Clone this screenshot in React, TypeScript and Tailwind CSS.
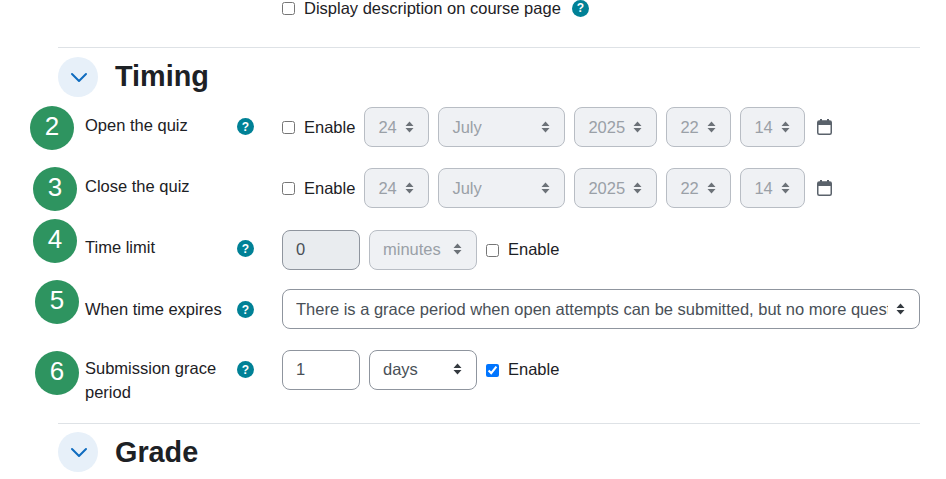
import React from 'react'

const Caret = ({ muted }: { muted?: boolean }) => (
    <svg width="9" height="14" viewBox="0 0 9 14" className={`shrink-0 fill-current ${muted ? 'text-[#6c7278]' : 'text-[#343a40]'}`}>
        <path d="M4.5 1.5 8.5 6H.5zM4.5 12.5.5 8h8z" />
    </svg>
)

const Select = ({ text, width, disabled, long, lift }: { text: string; width: string; disabled?: boolean; long?: boolean; lift?: boolean }) => (
    <div className={`${width} ${disabled ? 'bg-[#eff1f4] border-[#b8bdc4] text-[#9aa0a7]' : 'bg-white border-[#8f959e] text-[#495057]'} ${lift ? 'pb-[2px]' : ''} h-10 border rounded-lg pl-[13px] pr-[14px] flex items-center justify-between gap-2`}>
        <span className={`${long ? 'min-w-0 flex-1' : ''} overflow-hidden whitespace-nowrap`}>{text}</span>
        <Caret muted={disabled} />
    </div>
)

const Check = ({ checked }: { checked?: boolean }) => (
    <input type="checkbox" readOnly checked={!!checked} className="w-[13px] h-[13px] m-0" />
)

const Help = () => (
    <span className="w-[17px] h-[17px] rounded-full bg-[#008196] text-white text-[12px] font-bold flex items-center justify-center shrink-0">?</span>
)

const Label = ({ children, help, pt, helpMt = 'mt-[5px]' }: { children: React.ReactNode; help?: boolean; pt: string; helpMt?: string }) => (
    <div className={`w-[224px] shrink-0 pl-[27px] flex items-start ${pt}`}>
        <div className="w-[152px] leading-6 text-[#1d2125]">{children}</div>
        {help && <div className={helpMt}><Help /></div>}
    </div>
)

const CalendarIcon = () => (
    <svg width="15" height="16" viewBox="0 0 15 16" className="ml-[12px] shrink-0">
        <rect x="3" y="0" width="2" height="3" fill="#5a626b" />
        <rect x="10" y="0" width="2" height="3" fill="#5a626b" />
        <rect x="0.75" y="2" width="13.5" height="13.25" rx="1.5" fill="none" stroke="#5a626b" strokeWidth="1.5" />
        <rect x="1" y="2" width="13" height="4" fill="#5a626b" />
    </svg>
)

const DateRow = () => (
    <div className="flex items-center">
        <Check />
        <span className="ml-[9px] mr-[9px] text-[#1d2125]">Enable</span>
        <Select text="24" width="w-[65px]" disabled />
        <div className="w-[9px]" />
        <Select text="July" width="w-[127px]" disabled />
        <div className="w-[9px]" />
        <Select text="2025" width="w-[83px]" disabled />
        <div className="w-[9px]" />
        <Select text="22" width="w-[65px]" disabled />
        <div className="w-[9px]" />
        <Select text="14" width="w-[65px]" disabled />
        <CalendarIcon />
    </div>
)

const SectionHead = ({ title, pt, leading }: { title: string; pt: string; leading: string }) => (
    <div className={`border-t border-[#dee2e6] ${pt} flex items-start h-auto`}>
        <div className="w-10 h-10 rounded-full bg-[#e7f0f9] pl-[2px] flex items-center justify-center">
            <svg width="18" height="11" viewBox="0 0 18 11" fill="none" stroke="#0f6cbf" strokeWidth="2" strokeLinecap="round" strokeLinejoin="round">
                <path d="M2 2l7 7 7-7" />
            </svg>
        </div>
        <h3 className={`ml-[17px] h-10 text-[28.8px] font-bold text-[#1d2125] ${leading}`}>{title}</h3>
    </div>
)

const Badge = ({ n, pos }: { n: number; pos: string }) => (
    <div className={`absolute ${pos} w-11 h-11 rounded-full bg-[#2e9460] text-white text-[26px] pb-[3px] flex items-center justify-center`}>{n}</div>
)

export default function App() {
    return (
        <div className="relative w-[946px] h-[479px] overflow-hidden bg-white font-['Liberation_Sans',sans-serif] text-[16.5px]">
            <div className="pl-[58px] w-[920px]">
                <div className="h-[47px] pl-[224px] flex items-start">
                    <div className="flex items-center h-4">
                        <Check />
                        <span className="ml-[9px] text-[#1d2125]">Display description on course page</span>
                        <span className="ml-[11px]"><Help /></span>
                    </div>
                </div>

                <SectionHead title="Timing" pt="pt-[9px]" leading="leading-[38px]" />

                <div className="mt-[10px] flex mb-[21px]">
                    <Label help pt="pt-[6px]">Open the quiz</Label>
                    <DateRow />
                </div>
                <div className="flex mb-[22px]">
                    <Label pt="pt-[6px]">Close the quiz</Label>
                    <DateRow />
                </div>
                <div className="flex mb-[19px]">
                    <Label help pt="pt-[5px]">Time limit</Label>
                    <div className="flex items-center">
                        <div className="w-[78px] h-10 border border-[#8f959e] rounded-lg bg-[#e9ecef] pl-[13px] pb-[2px] flex items-center text-[#495057]">0</div>
                        <div className="w-[9px]" />
                        <Select text="minutes" width="w-[108px]" disabled lift />
                        <div className="w-[9px]" />
                        <Check />
                        <span className="ml-[9px] pb-[2px] text-[#1d2125]">Enable</span>
                    </div>
                </div>
                <div className="flex mb-[21px]">
                    <Label help pt="pt-[8px]" helpMt="mt-[4px]">When time expires</Label>
                    <Select text="There is a grace period when open attempts can be submitted, but no more questions answered" width="w-[638px]" long />
                </div>
                <div className="flex h-[73px]">
                    <Label help pt="pt-[6px]">Submission grace period</Label>
                    <div className="flex items-center h-10">
                        <div className="w-[78px] h-10 border border-[#8f959e] rounded-lg bg-white pl-[13px] pb-[2px] flex items-center text-[#495057]">1</div>
                        <div className="w-[9px]" />
                        <Select text="days" width="w-[108px]" lift />
                        <div className="w-[9px]" />
                        <Check checked />
                        <span className="ml-[9px] pb-[2px] text-[#1d2125]">Enable</span>
                    </div>
                </div>

                <SectionHead title="Grade" pt="pt-[8px]" leading="leading-10" />
            </div>

            <Badge n={2} pos="left-[30px] top-[106px]" />
            <Badge n={3} pos="left-[33px] top-[167px]" />
            <Badge n={4} pos="left-[33px] top-[219px]" />
            <Badge n={5} pos="left-[35px] top-[280px]" />
            <Badge n={6} pos="left-[35px] top-[351px]" />
        </div>
    )
}
